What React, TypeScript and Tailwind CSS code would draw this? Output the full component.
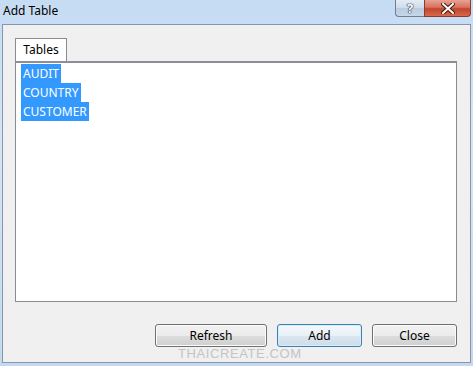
import type { ReactNode } from "react";

const tables = ["AUDIT", "COUNTRY", "CUSTOMER"];

function DialogButton({ children, primary, width }: { children: ReactNode; primary?: boolean; width: string }) {
  return (
    <button
      type="button"
      className={
        primary
          ? `${width} h-[23px] rounded-[3px] border border-[#3c7fb1] bg-[linear-gradient(180deg,#f4f8fb_0%,#e9f1f7_50%,#dbe6ef_51%,#cfdde8_100%)] text-[12px] text-black shadow-[inset_0_0_0_1px_#d6eefb]`
          : `${width} h-[23px] rounded-[3px] border border-[#707070] bg-[linear-gradient(180deg,#f2f2f2_0%,#ebebeb_50%,#dddddd_51%,#cfcfcf_100%)] text-[12px] text-black shadow-[inset_0_0_0_1px_#fbfbfb]`
      }
    >
      {children}
    </button>
  );
}

export default function App() {
  return (
    <div className="relative h-[366px] w-[473px] overflow-hidden bg-[linear-gradient(180deg,#c6dcf3_0%,#d4e5f6_40%,#c4d9ef_100%)] font-['Noto_Sans',sans-serif]">
      {/* title bar */}
      <div className="flex h-[24px] items-start justify-between">
        <span className="pl-[3px] pt-[3px] text-[12px] leading-[15px] text-black">Add Table</span>
        <div className="mr-[2px] flex h-[17px]">
          <div className="flex w-[29px] items-center justify-center rounded-bl-[4px] border border-r-0 border-t-0 border-[#6d7e93] bg-[linear-gradient(180deg,#e4ecf5_0%,#d0dceb_50%,#b9cbe0_51%,#c7d7ea_100%)]">
            <span className="text-[13px] font-bold leading-[15px] text-white [text-shadow:0_0_1px_#2b3b52,0_0_1px_#2b3b52,0_0_1px_#2b3b52,0_0_1px_#2b3b52]">?</span>
          </div>
          <div className="flex w-[47px] items-center justify-center rounded-br-[4px] border border-t-0 border-[#8a3a2e] bg-[linear-gradient(180deg,#e8a293_0%,#d8735f_45%,#c2432c_55%,#d86a4c_100%)]">
            <svg width="14" height="11" viewBox="0 0 14 11">
              <path d="M2 1 L12 10 M12 1 L2 10" stroke="#4a1a12" strokeWidth="4" strokeLinecap="square" />
              <path d="M2 1 L12 10 M12 1 L2 10" stroke="#ffffff" strokeWidth="2" strokeLinecap="square" />
            </svg>
          </div>
        </div>
      </div>

      {/* client area */}
      <div className="ml-[2px] h-[339px] w-[469px] border border-[#8497ad] bg-[#f0f0f0] pl-[12px] pr-[13px] pt-[13px]">
        <div className="flex">
          <div className="flex h-[23px] w-[52px] items-center justify-center border border-b-0 border-[#898c95] bg-white text-[12px] text-black">
            Tables
          </div>
        </div>
        <div className="h-[241px] border border-t-2 border-[#898c95] border-t-[#8c8f97] bg-white pl-[5px] pt-[1px]">
          {tables.map((t) => (
            <div key={t} className="flex h-[19px]">
              <span className="bg-[#3399ff] px-[2px] text-[12px] leading-[19px] text-white">{t}</span>
            </div>
          ))}
        </div>
        <div className="mt-[22px] flex justify-end gap-[10px]">
          <DialogButton width="w-[112px]">Refresh</DialogButton>
          <DialogButton width="w-[85px]" primary>
            Add
          </DialogButton>
          <DialogButton width="w-[85px]">Close</DialogButton>
        </div>
      </div>

      <span className="absolute left-[178px] top-[347px] font-['Liberation_Sans',sans-serif] text-[13px] leading-[14px] tracking-[0.6px] text-[#c4c4c4]">
        THAICREATE.COM
      </span>
    </div>
  );
}
